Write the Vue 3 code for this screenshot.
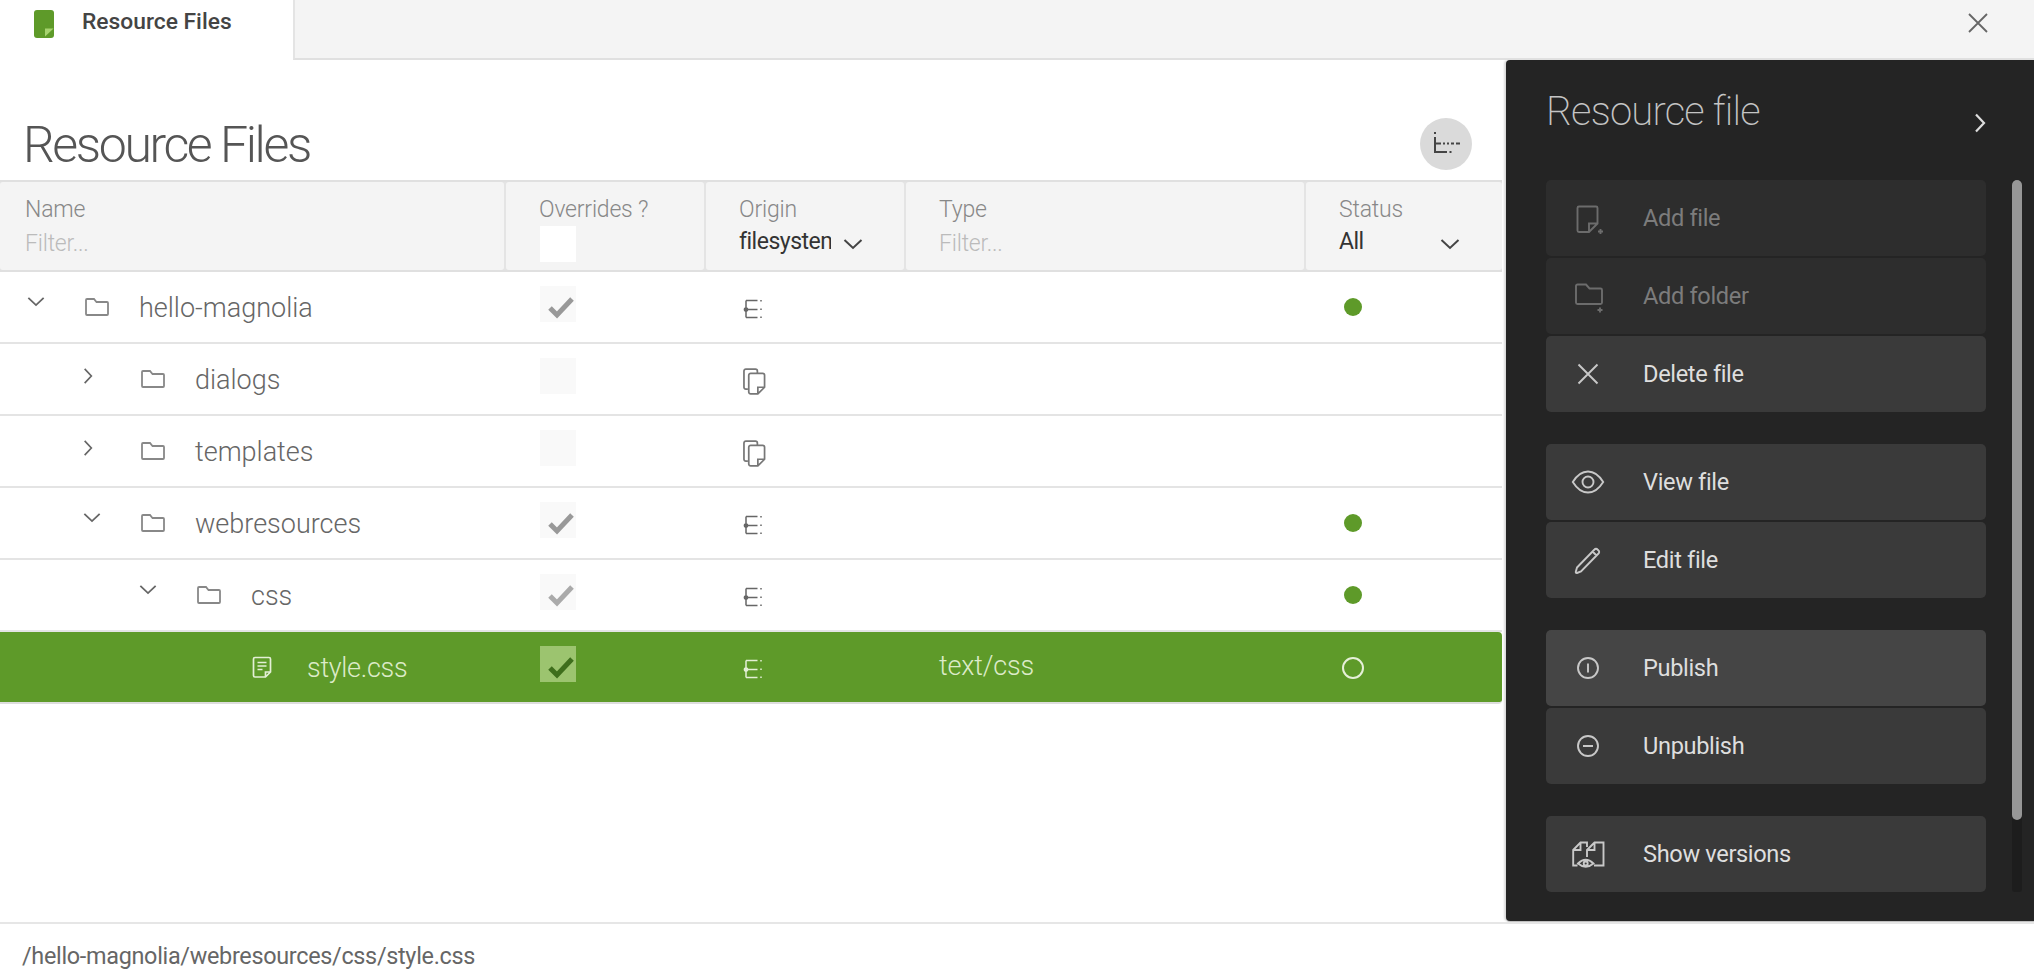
<script setup>
const folder = 'M1 16.500V3A1 1 0 0 1 2 2h7l2.500 3H22a1 1 0 0 1 1 1v11a1 1 0 0 1-1 1H2a1 1 0 0 1-1-1z'
const tree = 'M3 1.500v17M3 1.500h11.500M3 10.500h11.500M3 18.500h11.500M18 1v1.500M18 9.500v1.500M18 17.500v1.500M3 8.900a1.600 1.600 0 1 0 0 3.200a1.600 1.600 0 1 0 0-3.200z'
const copies = 'M5 22H3A2 2 0 0 1 1 20V3A2 2 0 0 1 3 1h10a2 2 0 0 1 2 2v2M8 5.500h12.500A2 2 0 0 1 22.500 7.500V20l-7 7H8A2 2 0 0 1 6 25V7.500A2 2 0 0 1 8 5.500zM22 20h-6.500v6.500'

const rows = [
  { name: 'hello-magnolia', level: 0, open: true, check: 'dark', origin: 'tree', dot: true },
  { name: 'dialogs', level: 1, open: false, check: 'none', origin: 'copies' },
  { name: 'templates', level: 1, open: false, check: 'none', origin: 'copies' },
  { name: 'webresources', level: 1, open: true, check: 'dark', origin: 'tree', dot: true },
  { name: 'css', level: 2, open: true, check: 'light', origin: 'tree', dot: true },
  { name: 'style.css', level: 3, file: true, check: 'sel', origin: 'tree', type: 'text/css', selected: true, ring: true }
]

const groups = [
  [
    { label: 'Add file', off: true, d: 'M7 4.500h17A1.500 1.500 0 0 1 25.500 6v15.500L17 30H7A1.500 1.500 0 0 1 5.500 28.500V6A1.500 1.500 0 0 1 7 4.500zM25.500 21.500H17V30M28.500 27v5M26 29.500h5' },
    { label: 'Add folder', off: true, d: 'M4 22.500V6A1.500 1.500 0 0 1 5.500 4.500h8.500l3.500 4h11A1.500 1.500 0 0 1 30 10v12.500a1.500 1.500 0 0 1-1.500 1.500h-23A1.500 1.500 0 0 1 4 22.500zM28 27.500v5M25.500 30h5' },
    { label: 'Delete file', d: 'M6.500 6.500l19 19M25.500 6.500l-19 19' }
  ],
  [
    { label: 'View file', d: 'M.8 16C4.500 10 10 5.500 16 5.500S27.500 10 31.200 16C27.500 22 22 26.500 16 26.500S4.500 22 .8 16zM16 10.500a5.500 5.500 0 1 0 0 11a5.500 5.500 0 1 0 0-11z' },
    { label: 'Edit file', d: 'M5 23.500L22.500 5.500a2 2 0 0 1 3 0l1 1a2 2 0 0 1 0 3L9 27.500l-4 1.500q-1.500 .3-1.200-1.200zM21 8l4 4' }
  ],
  [
    { label: 'Publish', hot: true, d: 'M16 6a10 10 0 1 0 0 20a10 10 0 1 0 0-20zM16 11.500v9' },
    { label: 'Unpublish', d: 'M16 6a10 10 0 1 0 0 20a10 10 0 1 0 0-20zM11 16h10' }
  ],
  [
    { label: 'Show versions', d: 'M5.500 27.500H1.200V12L8.500 4.500H15V9M8.500 4.500V12H1.200M15 19V12l7.500-7.500h9v23H22M22.500 4.500V12H15M6 25.500Q13.700 18 21.500 25.500Q13.700 32 6 25.500zM13.700 23.500a2 2 0 1 0 0 4a2 2 0 1 0 0-4z' }
  ]
]
</script>

<template>
  <div class="app">
    <header class="tabs">
      <div class="tab">
        <svg class="tab-icon" viewBox="0 0 20 28">
          <rect width="20" height="28" rx="3" fill="#5e9a29" />
          <path d="M11 26.500v-8h8.500z" fill="#a6d36f" />
        </svg>
        <span>Resource Files</span>
      </div>
      <div class="tab-rest">
        <svg class="close" viewBox="0 0 20 20"><path d="M1 1l18 18M19 1L1 19" /></svg>
      </div>
    </header>

    <div class="middle">
      <main class="content">
        <div class="title-row">
          <h1>Resource Files</h1>
          <button class="round">
            <svg viewBox="0 0 28 24"><path d="M1 0v2M1 5v15h12M1 11.500h6M9 11.500h2M13 11.500h2M17 11.500h3M22 11.500h4M15.500 20h2" /></svg>
          </button>
        </div>

        <div class="grid head">
          <div class="hcell">
            <label>Name</label>
            <div class="filter">Filter...</div>
          </div>
          <div class="hcell">
            <label>Overrides ?</label>
            <div class="blank"></div>
          </div>
          <div class="hcell">
            <label>Origin</label>
            <div class="select">
              <span class="clip">filesystem</span>
              <svg class="chev" viewBox="0 0 20 12"><path d="M1.500 2L10 10l8.500-8" /></svg>
            </div>
          </div>
          <div class="hcell">
            <label>Type</label>
            <div class="filter">Filter...</div>
          </div>
          <div class="hcell">
            <label>Status</label>
            <div class="select wide">
              <span>All</span>
              <svg class="chev" viewBox="0 0 20 12"><path d="M1.500 2L10 10l8.500-8" /></svg>
            </div>
          </div>
        </div>

        <div v-for="r in rows" :key="r.name" class="grid row" :class="{ selected: r.selected }">
          <div class="name" :style="{ paddingLeft: 27 + r.level * 56 + 'px' }">
            <span class="toggle">
              <svg v-if="r.open" class="t-down" viewBox="0 0 20 12"><path d="M1.500 2L10 10l8.500-8" /></svg>
              <svg v-else-if="!r.file" class="t-right" viewBox="0 0 12 20"><path d="M2 1.500l8 8.500-8 8.500" /></svg>
            </span>
            <svg v-if="r.file" class="node file" viewBox="0 0 24 24">
              <path d="M5 2.500h14a1.500 1.500 0 0 1 1.500 1.500v13l-5 5H5A1.500 1.500 0 0 1 3.500 20.500V4A1.500 1.500 0 0 1 5 2.500zM7.500 7.500h9M7.500 11h9M7.500 14.500h5M20 17h-4.500v5" />
            </svg>
            <svg v-else class="node" viewBox="0 0 24 20"><path :d="folder" /></svg>
            <span class="label">{{ r.name }}</span>
          </div>
          <div class="cell">
            <div class="box" :class="r.check">
              <svg v-if="r.check !== 'none'" viewBox="0 0 28 24"><path d="M3 13l7 7L25 4" /></svg>
            </div>
          </div>
          <div class="cell origin">
            <svg v-if="r.origin === 'tree'" class="o-tree" viewBox="0 0 20 20"><path :d="tree" /></svg>
            <svg v-else class="o-copies" viewBox="0 0 24 28"><path :d="copies" /></svg>
          </div>
          <div class="cell type">{{ r.type }}</div>
          <div class="cell status">
            <span v-if="r.dot" class="dot"></span>
            <span v-if="r.ring" class="ring"></span>
          </div>
        </div>
      </main>

      <aside class="panel">
        <div class="panel-head">
          <h2>Resource file</h2>
          <svg viewBox="0 0 12 20"><path d="M2 1.500l8 8.500-8 8.500" /></svg>
        </div>
        <div class="panel-body">
          <div class="actions">
            <div v-for="(g, i) in groups" :key="i" class="group">
              <div v-for="a in g" :key="a.label" class="action" :class="{ off: a.off, hot: a.hot }">
                <svg viewBox="0 0 32 32"><path :d="a.d" /></svg>
                <span>{{ a.label }}</span>
              </div>
            </div>
          </div>
          <div class="scroll"><div class="thumb"></div></div>
        </div>
      </aside>
    </div>

    <footer class="path">/hello-magnolia/webresources/css/style.css</footer>
  </div>
</template>

<style>
html, body { margin: 0; background: #fff; overflow: hidden; }
</style>

<style scoped>
.app {
  width: 2034px;
  height: 980px;
  display: flex;
  flex-direction: column;
  font-family: Roboto, "Liberation Sans", sans-serif;
  color: #666;
  background: #fff;
}
svg { display: block; fill: none; stroke: currentColor; overflow: visible; }

.tabs { height: 60px; display: flex; flex: none; }
.tab {
  width: 293px;
  flex: none;
  box-sizing: border-box;
  padding: 8px 0 0 34px;
  display: flex;
  align-items: flex-start;
  gap: 28px;
  background: #fff;
  font-size: 22.800px;
  font-weight: 500;
  color: #444;
  line-height: 28px;
}
.tab-icon { width: 20px; height: 28px; margin-top: 2px; stroke: none; }
.tab-rest {
  flex: 1;
  background: #f4f4f4;
  border-left: 2px solid #e4e4e4;
  border-bottom: 2px solid #e0e0e0;
  display: flex;
  justify-content: flex-end;
  padding: 13px 46px 0 0;
}
.close { width: 20px; height: 20px; color: #666; stroke-width: 1.800; }

.middle { height: 862px; display: flex; flex: none; background: #fff; }
.content { width: 1502px; flex: none; background: #fff; }
.title-row {
  height: 120px;
  box-sizing: border-box;
  padding: 0 23px;
  display: flex;
  align-items: flex-start;
  justify-content: space-between;
}
h1 {
  margin: 53px 0 0;
  font-size: 50px;
  line-height: 64px;
  font-weight: 300;
  letter-spacing: -2.400px;
  color: #555;
}
.round {
  width: 52px;
  height: 52px;
  margin: 58px 7px 0 0;
  padding: 0;
  border: 0;
  border-radius: 50%;
  background: #dadada;
  display: flex;
  align-items: center;
  justify-content: center;
  color: #444;
}
.round svg { width: 28px; height: 24px; stroke-width: 2; margin-left: 4px; }

.grid {
  display: grid;
  grid-template-columns: 506px 200px 200px 400px 196px;
}
.head {
  height: 92px;
  box-sizing: border-box;
  border-top: 2px solid #e0e0e0;
  border-bottom: 2px solid #e0e0e0;
  background: #e4e4e4;
  font-size: 23px;
  font-weight: 300;
}
.hcell {
  background: #f4f4f4;
  margin-right: 2px;
  border-radius: 3px;
  padding: 13px 0 0 33px;
  box-sizing: border-box;
  min-width: 0;
}
.hcell:first-child { padding-left: 25px; }
.hcell:last-child { margin-right: 0; }
.hcell label { display: block; height: 33px; line-height: 30px; color: #888; letter-spacing: -.2px; }
.filter { color: #bbb; line-height: 32px; letter-spacing: -.2px; }
.blank { width: 36px; height: 36px; background: #fff; margin: -2px 0 0 1px; }
.select { display: flex; align-items: center; height: 32px; margin-top: -3px; color: #333; font-weight: 400; gap: 12px; letter-spacing: -.5px; }
.select.wide { justify-content: space-between; padding-right: 42px; }
.clip { width: 92px; overflow: hidden; white-space: nowrap; }
.chev { width: 20px; height: 12px; margin-top: 5px; stroke-width: 2; color: #444; flex: none; }

.row {
  height: 72px;
  box-sizing: border-box;
  border-bottom: 2px solid #e4e4e4;
  align-items: center;
  font-size: 27px;
  font-weight: 300;
  color: #666;
}
.row.selected {
  background: #5e9a29;
  color: #dcebc8;
  border-bottom-color: #dddddd;
  border-radius: 0 4px 4px 0;
}
.name { display: flex; align-items: center; height: 100%; }
.toggle { width: 58px; flex: none; height: 100%; display: flex; align-items: center; color: #666; }
.t-down { width: 18px; height: 11px; stroke-width: 2; margin-top: -12px; }
.t-right { width: 10px; height: 18px; stroke-width: 2; margin-top: -7px; }
.node { width: 24px; height: 20px; stroke-width: 1.800; color: #888; flex: none; }
.node.file { width: 24px; height: 24px; color: #e4efd6; margin-left: -3px; margin-right: 3px; stroke-width: 1.700; }
.label { margin-left: 30px; padding-top: 2px; }
.selected .label { letter-spacing: -.3px; }
.cell { padding-left: 34px; min-width: 0; }
.box { width: 36px; height: 36px; margin-top: -6px; background: #f9f9f9; display: flex; align-items: center; justify-content: center; }
.box svg { width: 28px; height: 24px; stroke-width: 5; margin: 6px 0 0 6px; color: #999; }
.box.light svg { color: #aaa; }
.box.sel { background: #9cc46f; }
.box.sel svg { color: #3e6e1c; }
.origin { padding-left: 37px; color: #666; }
.selected .origin { color: #e4efd6; }
.o-tree { width: 20px; height: 20px; stroke-width: 1.500; margin-top: 4px; }
.o-copies { width: 23px; height: 27px; stroke-width: 1.800; margin-top: 5px; color: #777; }
.type { padding-left: 33px; letter-spacing: -.2px; margin-top: -2px; }
.status { display: flex; align-items: center; padding-left: 38px; }
.dot { width: 18px; height: 18px; border-radius: 50%; background: #5e9a29; }
.ring { width: 22px; height: 22px; margin: 2px 0 0 -2px; border-radius: 50%; border: 2.500px solid #e6f0d8; box-sizing: border-box; }

.panel {
  width: 528px;
  flex: none;
  margin-left: 4px;
  height: 861px;
  box-sizing: border-box;
  background: #242424;
  border-radius: 4px 0 0 4px;
  padding: 0 12px 29px 40px;
  display: flex;
  flex-direction: column;
  box-shadow: 0 1px 1px #bbb, -2px 0 2px #ddd;
}
.panel-head {
  height: 120px;
  flex: none;
  display: flex;
  align-items: flex-start;
  justify-content: space-between;
  color: #ccc;
  padding-right: 36px;
}
.panel-head h2 { margin: 26px 0 0 0; font-size: 40px; line-height: 52px; font-weight: 200; letter-spacing: -.8px; color: #c4c4c4; }
.panel-head svg { width: 12px; height: 20px; margin-top: 53px; stroke-width: 2.200; color: #ddd; }
.panel-body { flex: 1; display: flex; justify-content: space-between; min-height: 0; }
.actions { width: 440px; display: flex; flex-direction: column; gap: 32px; }
.group { display: flex; flex-direction: column; gap: 2px; }
.action {
  height: 76px;
  border-radius: 5px;
  background: #3a3a3a;
  color: #dedede;
  display: flex;
  align-items: center;
  font-size: 23.600px;
  letter-spacing: -.35px;
  box-sizing: border-box;
}
.action svg { width: 32px; height: 32px; margin: 0 39px 0 26px; stroke-width: 1.900; flex: none; color: #c8c8c8; }
.action.off { background: #2d2d2d; color: #7c7c7c; }
.action.off svg { color: #6c6c6c; }
.action.hot { background: #454545; }
.scroll { width: 10px; background: #1d1d1d; border-radius: 3px; }
.thumb { height: 640px; background: #979797; border-radius: 5px; }

.path {
  flex: 1;
  display: flex;
  align-items: center;
  box-sizing: border-box;
  border-top: 2px solid #e6e6e6;
  padding: 8px 0 0 22px;
  font-size: 23.400px;
  letter-spacing: -.3px;
  color: #666;
  background: #fff;
  font-weight: 400;
}
</style>
